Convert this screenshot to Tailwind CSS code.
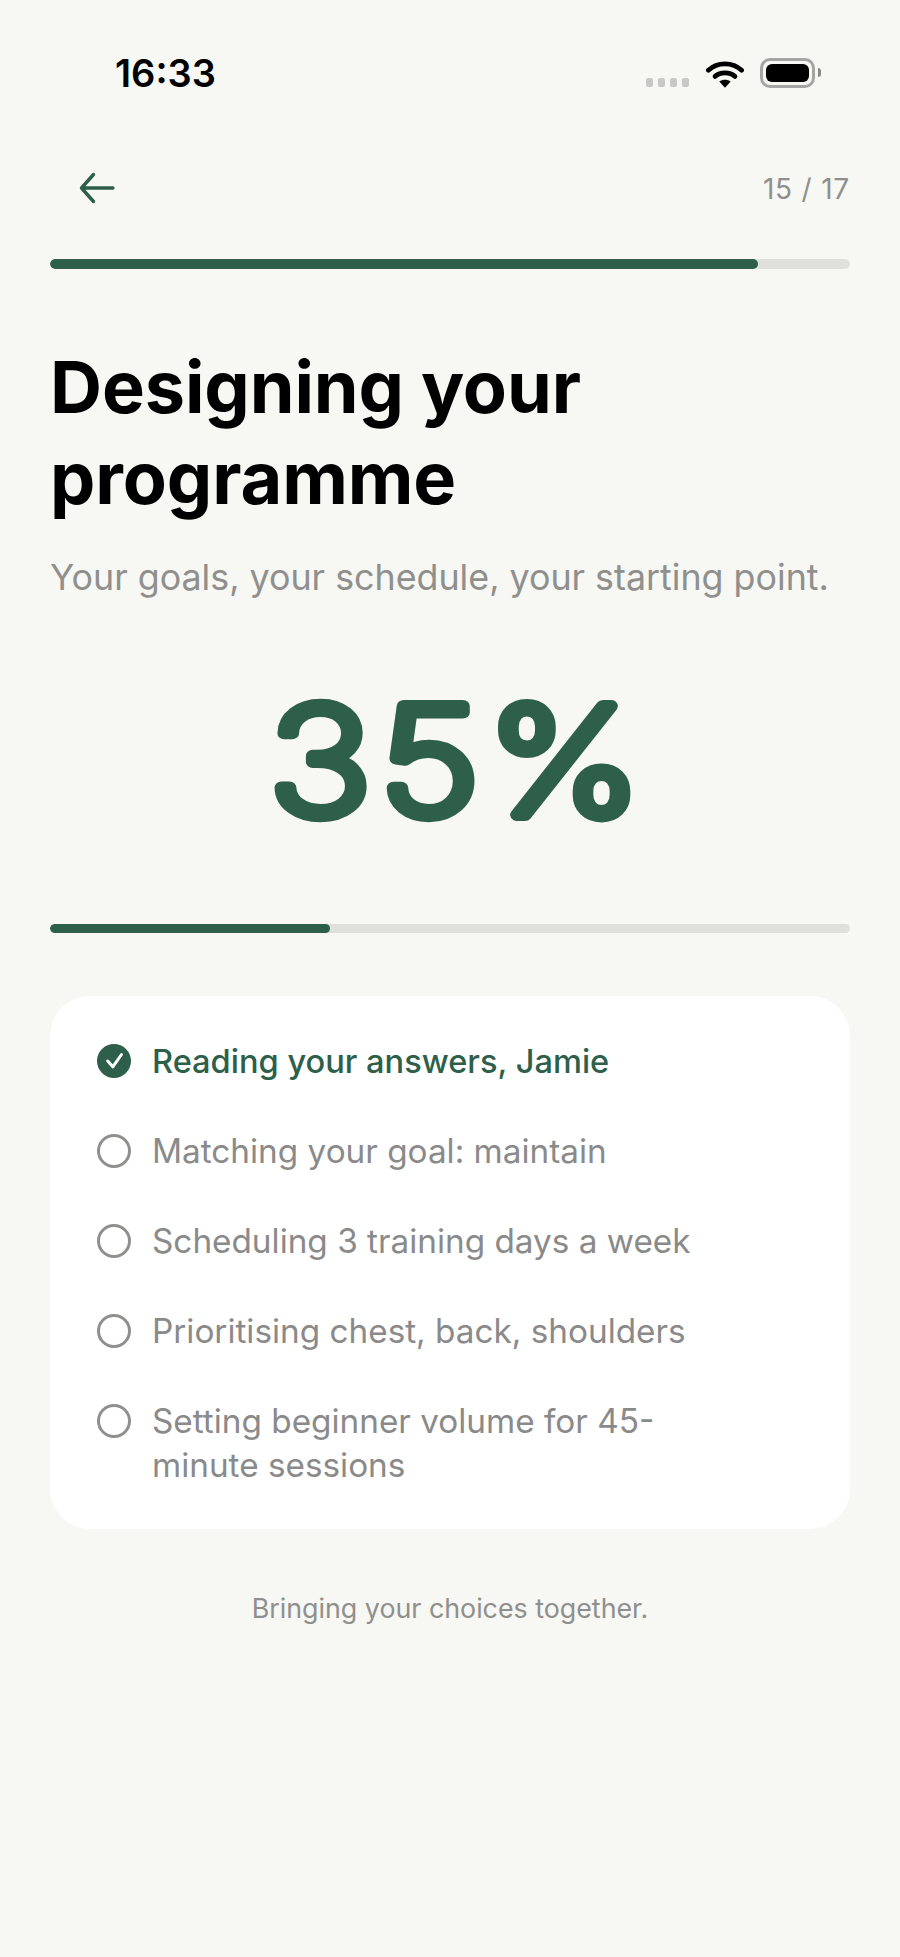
<!DOCTYPE html>
<html lang="en">
  <head>
    <meta charset="UTF-8" />
    <meta name="viewport" content="width=device-width, initial-scale=1.0" />
    <title>Designing your programme</title>
    <script src="https://cdn.jsdelivr.net/npm/@tailwindcss/browser@4"></script>
  </head>
  <body class="bg-[#f7f7f3] font-[Inter,sans-serif] w-[900px] h-[1957px] overflow-hidden">
    <!-- Status bar -->
    <div class="h-[146px] flex items-start justify-between pl-[115px] pr-[79px] pt-[51px]">
      <span class="text-[38px] leading-[44px] font-semibold text-black">16:33</span>
      <div class="flex items-start pt-[1px]">
        <div class="flex gap-[5px] mt-[26px]">
          <span class="w-[7px] h-[9px] rounded-[2px] bg-[#c8c8c6]"></span>
          <span class="w-[7px] h-[9px] rounded-[2px] bg-[#c8c8c6]"></span>
          <span class="w-[7px] h-[9px] rounded-[2px] bg-[#c8c8c6]"></span>
          <span class="w-[7px] h-[9px] rounded-[2px] bg-[#c8c8c6]"></span>
        </div>
        <svg class="ml-[17px] mt-[7px]" width="38" height="30" viewBox="0 0 40 30">
          <path d="M2.5 11 C12 2 28 2 37.5 11" fill="none" stroke="#000" stroke-width="5" stroke-linecap="round"/>
          <path d="M9.5 17.5 C15 12.5 25 12.5 30.5 17.5" fill="none" stroke="#000" stroke-width="5" stroke-linecap="round"/>
          <path d="M14 23 C17.5 20.5 22.5 20.5 26 23 L20 29.5 Z" fill="#000"/>
        </svg>
        <div class="ml-[16px] mt-[6px] w-[55px] h-[30px] rounded-[10px] border-[3px] border-[#a5a5a3] p-[3px]">
          <div class="w-full h-full rounded-[6px] bg-black"></div>
        </div>
        <span class="ml-[3px] mt-[16px] w-[3px] h-[9px] rounded-r-full bg-[#8a8a88]"></span>
      </div>
    </div>

    <div class="px-[50px]">
      <!-- Back and step count -->
      <div class="flex items-center justify-between h-[84px]">
        <svg class="ml-[28px]" width="40" height="40" viewBox="0 0 40 40" fill="none" stroke="#2d5f4a" stroke-width="3.4" stroke-linecap="round" stroke-linejoin="round">
          <path d="M35 20 H3.5 M15.5 6.5 L3.5 20 L15.5 33.5"/>
        </svg>
        <span class="mt-[2px] text-[28px] tracking-[0.8px] text-[#8f8f8d]">15 / 17</span>
      </div>
      <div class="mt-[29px] h-[10px] rounded-full bg-[#dfdfdb] overflow-hidden">
        <div class="h-full w-[708px] rounded-full bg-[#2d5f4a]"></div>
      </div>

      <h1 class="mt-[72px] text-[72px] leading-[91px] font-bold tracking-[-0.1px] text-black">Designing your<br />programme</h1>
      <p class="mt-[29px] text-[35.8px] leading-[50px] text-[#8f8f8d]">Your goals, your schedule, your starting point.</p>

      <!-- svg text so the stroke can round the glyph corners -->
      <svg class="mt-[41px] block" width="800" height="240" viewBox="0 0 800 240">
        <text transform="translate(409 172) scale(1.15 1)" text-anchor="middle" font-family="Inter" font-size="150" font-weight="250" letter-spacing="7" fill="#2d5f4a" stroke="#2d5f4a" stroke-width="12" stroke-linejoin="round">35%</text>
      </svg>

      <div class="mt-[41px] h-[9px] rounded-full bg-[#dfdfdb] overflow-hidden">
        <div class="h-full w-[280px] rounded-full bg-[#2d5f4a]"></div>
      </div>

      <!-- Steps card -->
      <div class="mt-[63px] bg-white rounded-[40px] pl-[47px] pr-[47px] pt-[43px] pb-[42px] flex flex-col gap-[46px] text-[33.3px] leading-[44px] text-[#8a8a8a]">
        <div class="flex items-start gap-[21px] text-[#2d5f4a] text-[32.6px] font-medium">
          <svg class="mt-[5px] shrink-0" width="34" height="34" viewBox="0 0 34 34">
            <circle cx="17" cy="17" r="17" fill="#2d5f4a"/>
            <path d="M10.7 17 L15.8 22.8 L24.5 10.5" fill="none" stroke="#fff" stroke-width="3" stroke-linecap="round" stroke-linejoin="round"/>
          </svg>
          <span>Reading your answers, Jamie</span>
        </div>
        <div class="flex items-start gap-[21px]">
          <span class="mt-[5px] shrink-0 w-[34px] h-[34px] rounded-full border-[3px] border-[#8f8f8d]"></span>
          <span>Matching your goal: maintain</span>
        </div>
        <div class="flex items-start gap-[21px]">
          <span class="mt-[5px] shrink-0 w-[34px] h-[34px] rounded-full border-[3px] border-[#8f8f8d]"></span>
          <span>Scheduling 3 training days a week</span>
        </div>
        <div class="flex items-start gap-[21px]">
          <span class="mt-[5px] shrink-0 w-[34px] h-[34px] rounded-full border-[3px] border-[#8f8f8d]"></span>
          <span>Prioritising chest, back, shoulders</span>
        </div>
        <div class="flex items-start gap-[21px]">
          <span class="mt-[5px] shrink-0 w-[34px] h-[34px] rounded-full border-[3px] border-[#8f8f8d]"></span>
          <span>Setting beginner volume for 45-<br />minute sessions</span>
        </div>
      </div>

      <p class="mt-[61px] text-center text-[26.8px] leading-[36px] text-[#8f8f8d]">Bringing your choices together.</p>
    </div>
  </body>
</html>
